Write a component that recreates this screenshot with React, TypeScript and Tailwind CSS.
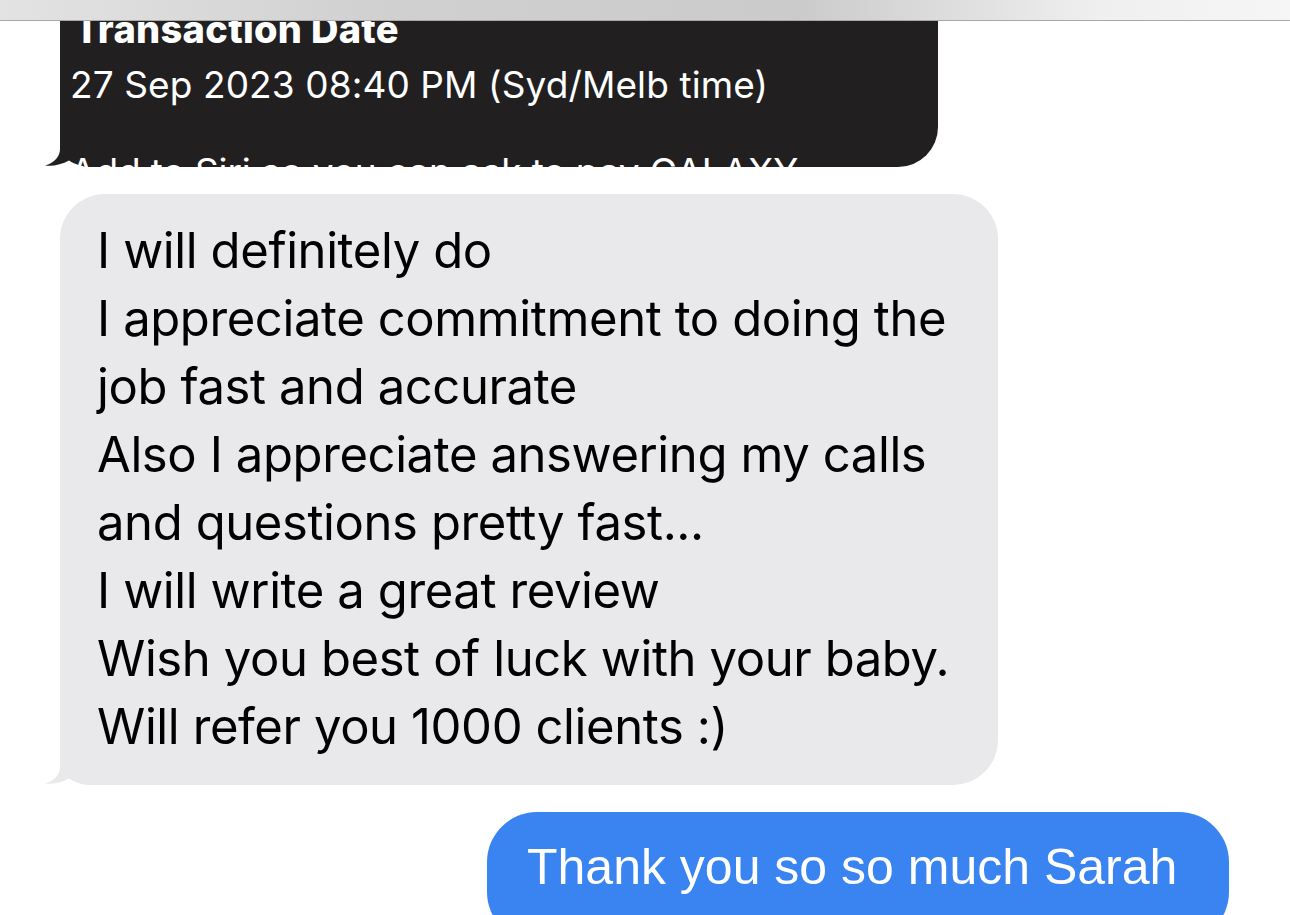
import React from 'react';

const lines = [
  'I will definitely do',
  'I appreciate commitment to doing the',
  'job fast and accurate',
  'Also I appreciate answering my calls',
  'and questions pretty fast...',
  'I will write a great review',
  'Wish you best of luck with your baby.',
  'Will refer you 1000 clients :)',
];

function Tail({ color }: { color: string }) {
  return (
    <svg
      className="absolute -left-[15px] bottom-0"
      width="60"
      height="40"
      viewBox="0 0 60 40"
    >
      <path
        d="M15 0 L15 22 C15 30 9 36 0 38.5 C8 39.5 17 37.5 24 33.5 C30 37.5 38 40 50 40 L60 40 L60 0 Z"
        fill={color}
      />
    </svg>
  );
}

export default function App() {
  return (
    <div className="w-[1290px] h-[915px] overflow-hidden bg-white font-['Inter','Liberation_Sans',sans-serif]">
      {/* browser chrome strip */}
      <div className="h-[21px] border-b border-[#a8a8a8] bg-[linear-gradient(90deg,#e3e3e3_0%,#d0d0d0_30%,#cbcbcb_62%,#efefef_85%,#f6f6f6_100%)]" />

      {/* dark receipt bubble, cut off at top */}
      <div className="relative ml-[60px] w-[878px] h-[146px] bg-[#211f20] rounded-br-[40px] rounded-bl-[30px]">
        <Tail color="#211f20" />
        <div className="relative h-full overflow-hidden pl-[10px] text-white">
          <div className="-mt-[20px] text-[38px] leading-[56px] font-extrabold tracking-[0.3px] pl-[4px]">
            Transaction Date
          </div>
          <div className="text-[37px] leading-[56px] tracking-[0.1px]">
            27 Sep 2023 08:40 PM (Syd/Melb time)
          </div>
          <div className="mt-[31px] text-[37px] leading-[56px] tracking-[-0.1px]">
            Add to Siri so you can ask to pay GALAXY
          </div>
        </div>
      </div>

      {/* incoming message */}
      <div className="relative mt-[27px] ml-[60px] w-[938px] bg-[#e9e9eb] rounded-[45px] rounded-bl-[30px] pl-[37px] pt-[23px] pb-[24px]">
        <Tail color="#e9e9eb" />
        {lines.map((l) => (
          <div key={l} className="relative whitespace-nowrap text-[49px] leading-[68px] text-black tracking-[-0.4px]">
            {l}
          </div>
        ))}
      </div>

      {/* outgoing message */}
      <div className="mt-[27px] ml-[487px] w-[742px] h-[130px] bg-[#3a84f2] rounded-[50px] pl-[40px] pt-[25px]">
        <div className="whitespace-nowrap font-['Liberation_Sans',sans-serif] text-[50px] leading-[60px] text-white">
          Thank you so so much Sarah
        </div>
      </div>
    </div>
  );
}
